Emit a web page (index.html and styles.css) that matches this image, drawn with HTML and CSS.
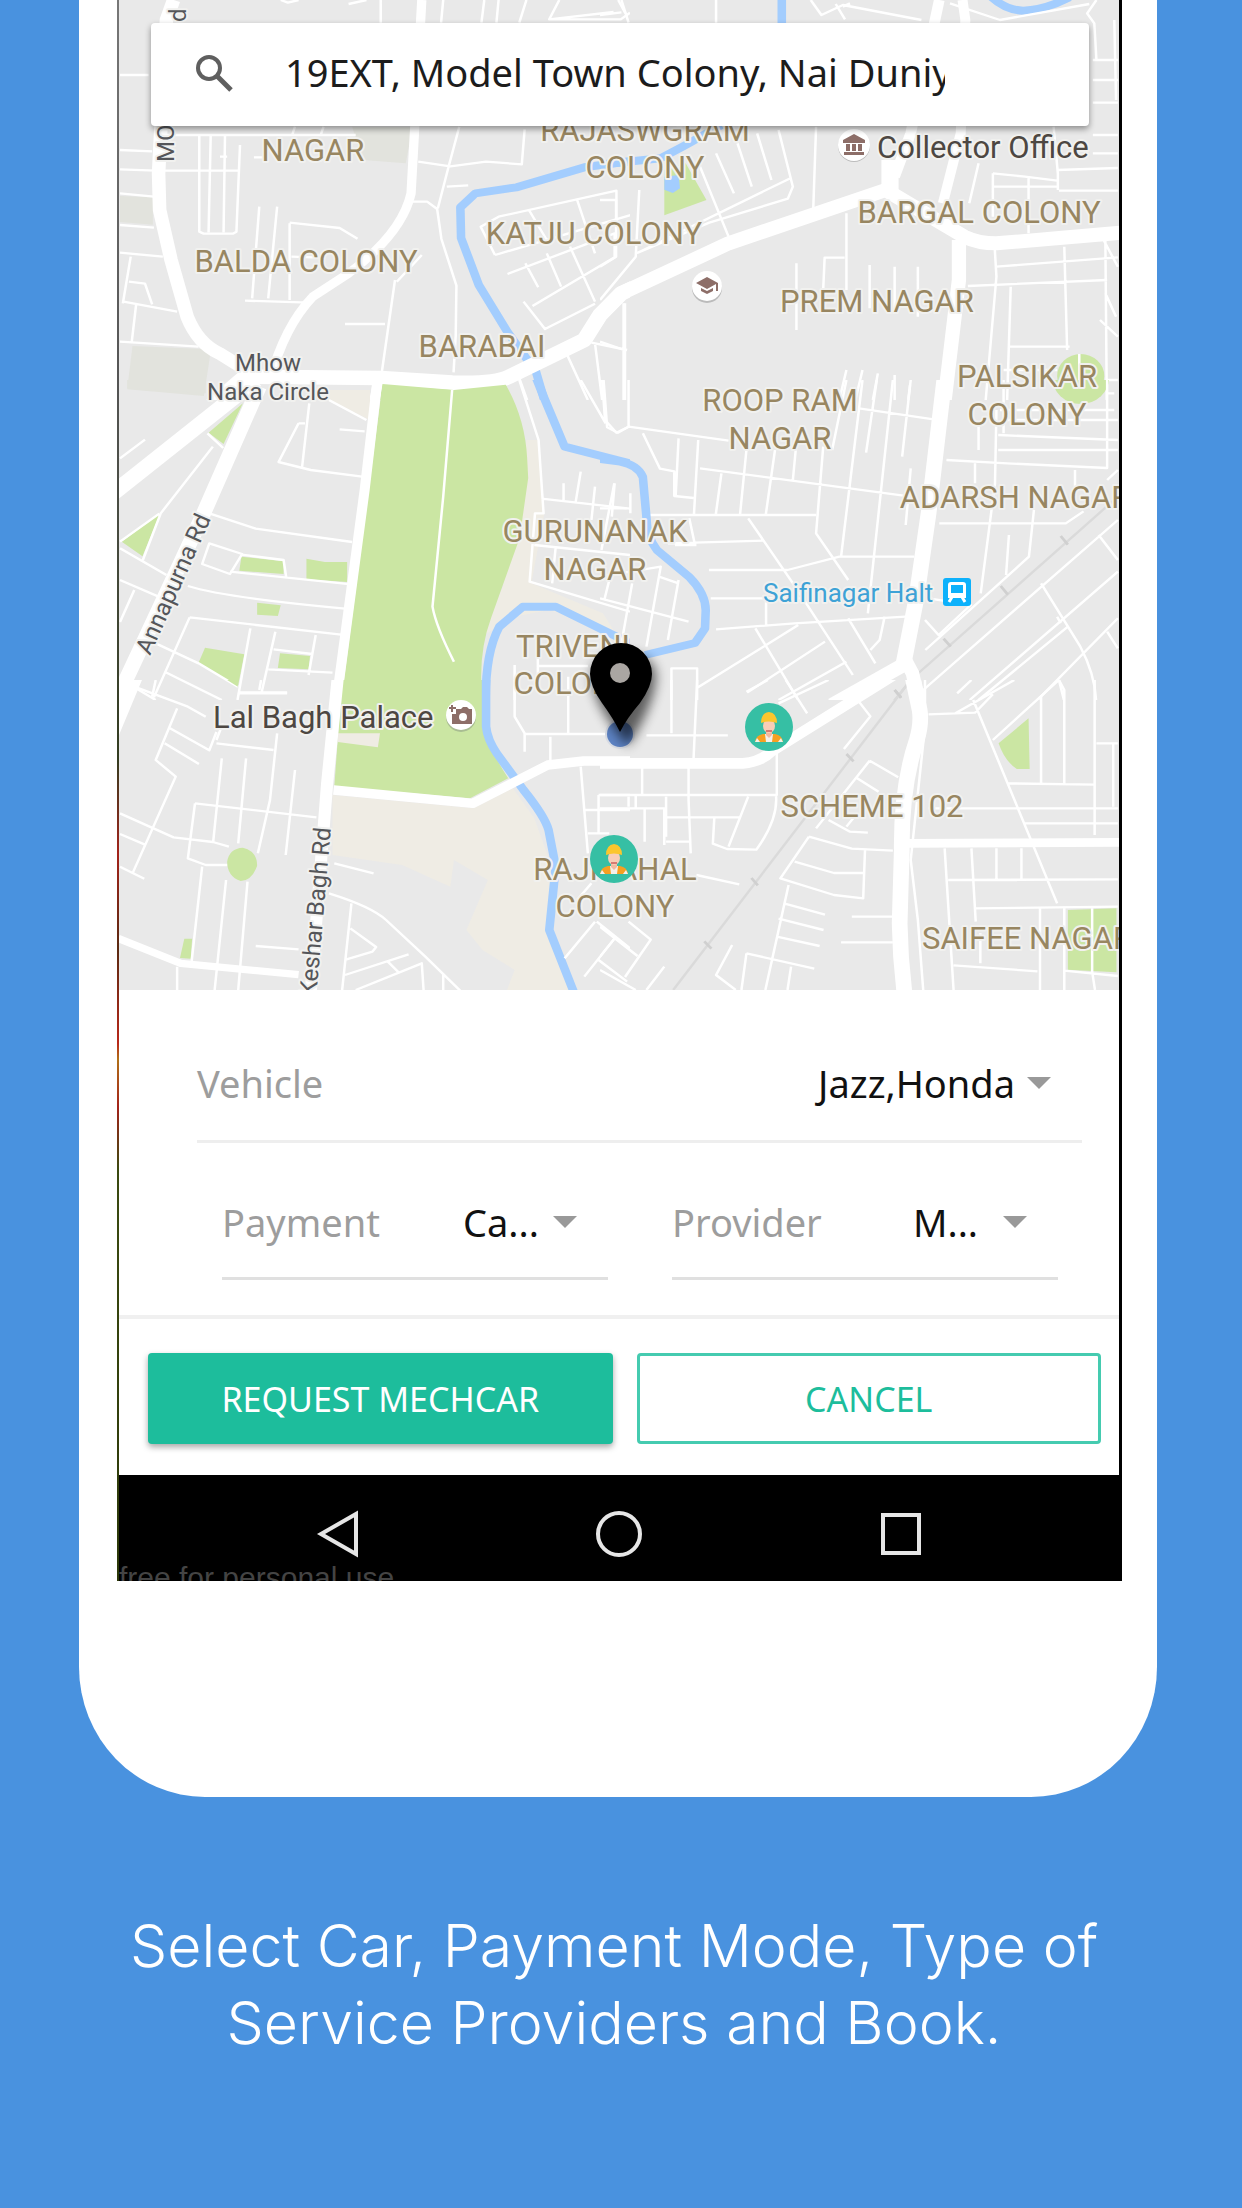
FILE: index.html
```html
<!DOCTYPE html>
<html lang="en">
<head>
<meta charset="utf-8">
<meta name="viewport" content="width=device-width, initial-scale=1">
<title>Request a mechanic</title>
<link rel="stylesheet" href="styles.css">
</head>
<body>
<main class="phone">
  <div class="screen">
    <section class="map-area">
      <svg class="map" viewBox="119 0 1000 990" role="img" aria-label="Map of the area around the pickup point">
        <defs>
          <filter id="soft" x="-50%" y="-50%" width="200%" height="200%"><feGaussianBlur stdDeviation="6"/></filter>
          <g id="mechanic">
            <circle r="24" fill="#36bfa4"/>
            <path d="M-14 15q1-7 8-8h12q7 1 8 8z" fill="#f6a021"/>
            <path d="M-14 15l2-4 3 4zM14 15l-2-4-3 4zM-4 7h8l-1 8h-6z" fill="#f4f0ea"/>
            <path d="M-3 3h6v5l-3 3-3-3z" fill="#f2b9a0"/>
            <ellipse cy="-1" rx="6" ry="7" fill="#f9cdb6"/>
            <path d="M-8-4q0-10 8-11 8 1 8 11-8-3-16 0z" fill="#fbc62d"/>
            <path d="M-3 4h6" stroke="#d77b72" stroke-width="2"/>
          </g>
        </defs>
        <rect x="119" width="1000" height="990" fill="#e9e9e9"/>

        <!-- north west -->
        <svg x="70" y="0" width="560" height="400" viewBox="0 0 1568 1200" preserveAspectRatio="none">
          <path class="block" d="M790 380h170l-20 110-120-10zM140 588l92 4v82l-92-8zM175 1038l220 10-20 140-215-20z"/>
          <path class="sand" d="M720 1170h120v30h-100z"/>
          <path class="park" d="M875 1152l200 14 145-14 14 48H868z"/>
          <path class="river" d="M1568 484l-128 18-190 60-115 18-42 42 2 92 50 142 80 140 80 120 30 110"/>
          <path class="lane" d="M140 225h80M140 450l90 4M140 508l100 4h230M140 580l95 10M140 675l95 8M140 758l120 12M165 845l45 6 20 62M150 905l150 30M185 915l-12 110M140 1025l220 15M170 770l-22 140M362 405v290l12 6h82l10-6 10-260M394 405l-6 292M434 405l-4 292M240 405h560M530 620l-20 275M580 620l-25 275M490 902l180 6M615 670v230M615 668l140 16 50 32M620 770l60 2M940 605h60l28 22 12 90 42 140-2 150-6 110M910 840l-40 300M985 765l-70 80M770 972h112M975 485l90 14 100-14 100 8 8-105M1090 380l-30 120-30 125M1055 560l60-4M870 0v68M1045 0l-6 68M1160 0l-8 68M1200 0l-6 68M1278 0l-20 68M1370 0l-28 58h200l26-20M1342 58l180-22M1535 0l20 40M590 0l20 8 30-8M780 12l50-12M1190 765l-40-85 50-30 330-78v110M1190 765l380-120M1285 630l50 90M1420 600l50 160M1225 822l300-122v72l-230 146M1275 790l36 72M1335 760l40 100M1400 740l70 165M1270 905l60 82 140-76M1550 910v290M1470 1030l20 170M1390 1060l60 140M1250 1110l30 90M1460 1028l100 22M630 380l-8 25M710 380l-8 25M440 470h-20M515 472h30"/>
          <g class="road">
            <path d="M290 0l-20 60-22 460 3 110 32 150 45 170q30 80 90 110l90 60" stroke-width="38"/>
            <path d="M490 1130l380 4 200 14q120 4 160-18l210-110 44-75 60-65 66-33" stroke-width="44"/>
            <path d="M560 1140q40-160 120-250l100-70q150-120 175-240l30-580" stroke-width="26"/>
            <path d="M490 1130l-120 110M500 1130l-40 110" stroke-width="44"/>
            <path d="M865 1130l-16 90" stroke-width="28"/>
          </g>
        </svg>

        <!-- north east -->
        <svg x="600" y="0" width="560" height="400" viewBox="0 0 1568 1200" preserveAspectRatio="none">
          <path class="park" d="M180 510l60-20 58 110-118 46z"/>
          <circle class="park" cx="1346" cy="1128" r="66"/>
          <path d="M180 530l40-5 4 40-20 14-24-10z" fill="#a3cdfe"/>
          <path class="river" d="M-10 495l180-20 70-40 100-60M509 0v120M1095-10q40 40 90 42 60-2 130-40" />
          <path class="lane" d="M0 45l60-8M60 0l20 68M325 0v68M590 0l30 45 60-30 220 45M700 10l-20 10M660 12l26 46M980 10l140 50 250-48M1390 0l-26 40 20 30 6 110M1380 180h70M1380 240h70M1380 308h70M1440 60l5 240M1380 405h70M1270 380l12 140v50M1380 460h70M1280 510l170-6M1285 572h165M1100 520l90 10 90 12M1100 520v130M1100 560h180M1200 530v170M1060 490l-26 120M605 380l-8 250M440 400l40 140M385 430l40 130M325 460l50 120M280 500l80 210M500 390l40 170-14 36-220 72-200 90 430-225M110 570l-10 200-100 130M0 600h45v170l-45 30M690 640v230M625 868l4-95h56M550 790v200M755 795v130M825 800v130M890 800v150M1105 740l5 90-30 370M1110 800l340-28M1030 858l390-18M1150 860l-10 340M1300 740l8 310M1415 720l4 480M1410 720l40 80M1415 880l30 70M1145 1040h170M1130 1110h150M1400 960l50 50M1420 1140h30M70 910v290M0 1025l68 25M690 1110l-20 90M735 1110l-20 90M778 1120l-14 80M825 1125v75M868 1155l-5 45M1342 1062v138"/>
          <g class="road">
            <path d="M-44 1020l44-75 60-65 300-150 440-160 220 140q40 20 90 20l350-32" stroke-width="42"/>
            <path d="M950 0l-30 150-50 250-45 130" stroke-width="30"/>
            <path d="M1015 0l8 60-13 340-50 210" stroke-width="28"/>
            <path d="M812 480v110" stroke-width="48"/>
            <path d="M1005 720v120l-40 360" stroke-width="40"/>
          </g>
        </svg>

        <!-- middle west -->
        <svg x="70" y="380" width="560" height="320" viewBox="0 0 1568 960" preserveAspectRatio="none">
          <path class="block" d="M160 0h220v40l-220-16z"/>
          <path class="sand" d="M730 30h110v90l-115-60zM1278 180h34l16 220-36 210 200 90 30 50-180-60-100 20-90 60 60-150z"/>
          <path class="park" d="M875 12l200 18 145-16q54 100 60 220l3 60-24 180-80 240q-38 110-24 246H760z"/>
          <path class="park" d="M388 158l96-88-54 122zM145 485l108-86-50 130zM480 530l118 14v38l-124-10zM662 536l52 10h62v60l-114-8zM524 668l66 8-8 32-58-4zM378 803l110 20-18 97-110-72zM588 820l84 8-4 40-86-4z"/>
          <path class="river" stroke-width="36" d="M1568 790l-208-110h-92l-66 60q-40 80-38 230"/>
          <path class="river" d="M1300-20l30 80 55 140 190 52"/>
          <path class="lane" d="M140 235l70-56M140 295l20 12M385 160l44 44M400 200l-146 200-50 140M140 485l110-84M140 505l130 80M140 600l160 74M180 630l-40 96M390 400l130 46 270 40M390 490l-20 62 78 30 34-60zM480 524l118 16 8 56M448 575l340 38M330 618q100 34 440 68M335 712l424 52M335 712l-100 240M240 790l120 60 110 70M265 875l160 85M180 922l60 38M505 745l-36 215M575 755l-38 180M470 937h138M688 765l-20 120M570 808l108 14M555 868l180 10M640 130l-56 116 90 24 144 20M670 70l-20 190M640 130h18M755 148l70 6M725 60l105 60M1070 30l-25 320-30 330q10 60 60 165" />
          <path class="lane" d="M1258 0l54 180 14 220-24 0-15 205 281 90M1320 356l248 30M1382 310v50M1430 275l-14 90M1470 320l-10 100M1525 310l-8 100M1300 495l268 30M1360 500l-10 110M1510 600l-14 60M1430 0l70 130M1490 0l8 120 32 38 38-20M1245 855v105M1310 830v90M1395 890v70M1310 858h140"/>
          <g class="road">
            <path d="M520 0L120 340" stroke-width="46"/>
            <path d="M530 20L370 410 200 800 130 960" stroke-width="42"/>
            <path d="M862-10L825 330 745 970" stroke-width="28"/>
          </g>
        </svg>

        <!-- middle east -->
        <svg x="600" y="380" width="560" height="320" viewBox="0 0 1568 960" preserveAspectRatio="none">
          <circle class="park" cx="1346" cy="-8" r="80"/>
          <path class="lane" d="M80 0v140l-30 18-30-16L10 0M80 140l280 42M120 160l48 106 40 8v74l54 6M220 175l-8 170M275 180l-12 225M280 265l570 82M340 280l-16 125M410 210l-18 195M490 210l-26 195M548 210l-8 90M625 200l-20 260 90 140M140 405h465M690 0l-40 210M735 0l-60 530M775 0l-30 218M820 0l-70 700M870 0l-24 230M725 85l214 34M870 265l-14 170M415 415l135 210 158 260M190 490l270-8M250 415l14 70M305 570h220l145-40h210M310 655h250M325 748l220-18 310-20M465 655v80M435 745l120 215M555 735L270 925M630 785L412 938M690 845L500 960M695 715l76 135M797 710l-14 70-26 30M200 960v-95h72v95M0 385h75M40 310l-36 200M85 340v60M0 590l170-30-40 240M0 655l248 70M220 600l-30 180M90 610l-30 180M165 590l55 20M270 495h-60" />
          <path class="lane" d="M970 240l170 10 280 14v-264M1110 90l-4 220-40 330M1130 0v160M1115 165l335 15M1115 210h335M1135 120h315M1060 130v80M1050 250v60M1330 270v90M1420 300l30-30M950 430h354l50-36M1145 465l-8 120M1215 390l-14 140-290 280M910 720l38 45 90-90-118-20M1450 420L905 930v30M1396 465l54 75M1235 610l110 190q40 80 44 160M1310 740L1060 960M1450 575L1035 960M1450 715L1225 960M1420 755l30 50M1285 900l14 60M1290 730l-10-20M1440 90h-320M1440 40h-20"/>
          <path class="rail" d="M1450 350L870 900l-60 80"/>
          <path class="rail-mark" d="M1290 468l20 26M1122 618l20 26M962 776l20 24M825 930l18 24"/>
          <path class="river" d="M-10 235l66 10q50 10 64 46l10 120q0 60 30 100l90 80q46 50 46 100l-2 54-28 44-140 36"/>
          <g class="road">
            <path d="M965-10L920 400 885 660 850 850" stroke-width="44"/>
            <path d="M850 830l25 50 20 100" stroke-width="38"/>
            <path d="M865 845L650 975" stroke-width="42"/>
          </g>
        </svg>

        <!-- south west -->
        <svg x="70" y="680" width="560" height="330" viewBox="0 0 1568 990" preserveAspectRatio="none">
          <path class="park" d="M762 0h393v130q20 80 72 165l-107 60-380-35zM440 0h30v20z"/>
          <path class="sand" d="M750 160h118l-6 42-112-16zM735 345l395 40 110-60 60 90 50 150-18 180 78 200-190-5 25-70-90-60-45-60 60-150-95-60-10 80-135-65-195-30z"/>
          <path class="park" d="M440 545q6-40 44-42 40 10 40 54-14 44-46 46-38-14-38-58zM320 776h22l-4 60-30-2z"/>
          <path class="river" stroke-width="24" d="M1165-10v150q4 40 30 80l75 110q60 80 70 120l20 110-18 190 70 190"/>
          <path class="lane" d="M180 20l150 60 50 30M300 85l-60 155 56 50L175 580M265 190l96 62M280 145l110 66 20-55M410 190l160 20M580 160l-20 200-34 160M425 235l-24 250M493 235l-22 255M630 270l-26 255M350 370l340 42M350 370l-20 165 50 20h60M140 400l150 72 110 14 45 14M140 462l70 32M140 560l68 36M370 560l-30 290M437 600l-32 330M497 605l-26 325M300 860v70M410 180l18-50M520 798l120 10M740 550l110 30M725 640q120 40 160 80l110 110 110 115M788 670l-26 260M785 745l72 56-10 14-75 24M770 885l178-62M890 845l32 34M800 930l185-80 5 80M1045 880v50M230 50l10-50M470 40h138M535 0l-5 30M1245 0v110l28 50v55M1270 162h230M1345 170v75M1395 60v100M1430 260l20 260M1440 390h128M1480 345v115M1480 345h88M1450 460h60M1470 725l-85 110M1475 725l93 80M1525 775l-85 115M1480 840l80 65M1420 660l40-50"/>
          <g class="road">
            <path d="M185-10l-70 180" stroke-width="38"/>
            <path d="M750-10L720 310 670 990" stroke-width="34"/>
            <path d="M738 330l390 40 210-115 100-12h140" stroke-width="28"/>
            <path d="M135 775l175 75 330 34" stroke-width="22"/>
          </g>
        </svg>

        <!-- south east -->
        <svg x="600" y="680" width="560" height="330" viewBox="0 0 1568 990" preserveAspectRatio="none">
          <path class="park" d="M1116 190l84-75 3 152h-36q-34-24-51-77zM1310 690l136-5v192l-136-8z"/>
          <path class="lane" d="M200 0v160M272 0l-10 235M130 166h228M520 0l60 100M640 0L500 70M725 65l32 44-74 98M118 260v85M0 345h495V215M248 260v100l6 160M0 385h180v110M185 350v120M80 350v30M100 345v38M125 385v100M185 412h210M415 350l-55 150M320 415l-4 76 40 16 82 2q60-90 55-160M185 485h70M270 585l120 28M755 242L605 445M755 242l80 50M720 295l60 40M640 420l60 35 50 3M690 440l30-40M585 470l120 36 115 6M585 470l-80 125 150 50 82 10 5-145M545 545l110 34h85M528 615l-65 315M515 670l115 34M500 716l126 34M495 770l120 28M410 820l190 46M410 820l-14 110M535 860l-10 70M705 710h115M675 787h145M370 795l-45 90 55 45M80 725l62 54-72 112M0 740l105 88M45 770L0 830M0 870l100 60M130 930l50-70M60 640l-20 40M410 35l60-35" />
          <path class="lane" d="M910 0v140l-40 400 20 180 15 210M920 103l130-5 50-55M1045 60L1280 670M995 100l165-100M1100 180L1285 0 1300 30v280M1235 50v260M1140 310l245 4M1385 0v465M1390 190h60M1437 190v190M920 385h530M1190 430h260M965 505l25 425M1040 505l12 220M1110 505v95M1180 505v95M975 600l475-2M1050 685l400-5M1065 760v90M990 856l235 18M1232 685v245M1300 685v245M1300 872l150 16M1378 685v190l8 55M1040 0l-40 40"/>
          <path class="rail" d="M870 0L205 930"/>
          <path class="rail-mark" d="M825 30l18 22M690 222l20 22M424 594l18 22M292 784l20 22"/>
          <g class="road">
            <path d="M0 250h400q50-4 80-36L860-40" stroke-width="32"/>
            <path d="M875-10l20 100q6 40-8 90-44 140-42 330l-6 220q2 130 20 260" stroke-width="44"/>
            <path d="M860 490l600-3" stroke-width="26"/>
          </g>
        </svg>

        <g class="district">
          <text x="313" y="161">NAGAR</text>
          <text x="306" y="272">BALDA COLONY</text>
          <text x="482" y="357">BARABAI</text>
          <text x="645" y="141">RAJASWGRAM</text>
          <text x="645" y="178">COLONY</text>
          <text x="594" y="244">KATJU COLONY</text>
          <text x="979" y="223">BARGAL COLONY</text>
          <text x="877" y="312">PREM NAGAR</text>
          <text x="780" y="411">ROOP RAM</text>
          <text x="780" y="449">NAGAR</text>
          <text x="1027" y="387">PALSIKAR</text>
          <text x="1027" y="425">COLONY</text>
          <text x="1015" y="508">ADARSH NAGAR</text>
          <text x="595" y="542">GURUNANAK</text>
          <text x="595" y="580">NAGAR</text>
          <text x="573" y="657">TRIVENI</text>
          <text x="573" y="694">COLONY</text>
          <text x="872" y="817">SCHEME 102</text>
          <text x="615" y="880">RAJMAHAL</text>
          <text x="615" y="917">COLONY</text>
          <text x="1027" y="949">SAIFEE NAGAR</text>
        </g>
        <g class="place">
          <text x="877" y="158">Collector Office</text>
          <text x="213" y="728">Lal Bagh Palace</text>
        </g>
        <text class="station" x="763" y="602">Saifinagar Halt</text>
        <g class="street">
          <text x="268" y="371" text-anchor="middle">Mhow</text>
          <text x="268" y="400" text-anchor="middle">Naka Circle</text>
          <text transform="translate(150 656) rotate(-66)">Annapurna Rd</text>
          <text transform="translate(331 828) rotate(-85)" text-anchor="end">Keshar Bagh Rd</text>
          <text transform="translate(174 162) rotate(-90)">MO</text>
          <text transform="translate(186 22) rotate(-90)">d</text>
        </g>

        <!-- public building -->
        <g transform="translate(854 145)">
          <circle cy="1" r="16" fill="#bbb"/><circle r="16" fill="#fff"/>
          <path d="M-11-5L0-11 11-5v3h-22zM-8-1h4v7h-4zM-2-1h4v7h-4zM4-1h4v7h-4zM-10 7h20v3h-20z" fill="#8d6e68"/>
        </g>
        <!-- school -->
        <g transform="translate(707 286)">
          <circle cy="2" r="15" fill="#bbb"/><circle r="15" fill="#fff"/>
          <path d="M-11-3L0-9l11 6v8H9v-7L0 3zM-6 2l6 3 6-3v3L0 8l-6-3z" fill="#8d6e68"/>
        </g>
        <!-- viewpoint -->
        <g transform="translate(461 715)">
          <circle cy="2" r="15" fill="#a9bd92"/><circle r="15" fill="#fff"/>
          <path d="M-9-10v7M-12-7h7" stroke="#8d6e68" stroke-width="2"/>
          <path d="M-9-1h4v-5h5l2-2h4l2 2h3V9H-9z" fill="#8d6e68"/>
          <circle cx="2" cy="2" r="4" fill="#fff"/>
        </g>
        <!-- railway station -->
        <g transform="translate(943 578)">
          <rect width="28" height="28" rx="3" fill="#0db1fb"/>
          <path d="M5 7q0-3 3-3h12q3 0 3 3v13H5z" fill="#fff"/>
          <path d="M8 7h12v8H8z" fill="#0db1fb"/>
          <path d="M9 19l-3 5M19 19l3 5" stroke="#fff" stroke-width="3"/>
        </g>

        <!-- providers and pickup point -->
        <use href="#mechanic" x="769" y="727"/>
        <use href="#mechanic" x="614" y="859"/>
        <circle cx="620" cy="734" r="15" fill="#d8dce4"/>
        <circle cx="620" cy="734" r="13" fill="#5d83c4"/>
        <path d="M628 746q-34-40-36-68 0-24 32-24t32 24q-2 28-28 68z" fill="#000" opacity=".6" filter="url(#soft)"/>
        <path d="M620 732q-7-14-18-29-12-17-12-29a31 31 0 0 1 62 0q0 12-12 29-13 15-20 29z" fill="#000"/>
        <circle cx="620" cy="673" r="10" fill="#aaa6a2"/>
      </svg>

      <div class="search">
        <svg class="search-icon" viewBox="0 0 38 38" aria-hidden="true"><circle cx="14" cy="14" r="11" fill="none" stroke="#5f5f5f" stroke-width="4"/><path d="M22 22l14 14" stroke="#5f5f5f" stroke-width="5"/></svg>
        <input class="search-input" type="text" aria-label="Pickup address" value="19EXT, Model Town Colony, Nai Duniya">
      </div>
    </section>

    <form class="booking">
      <div class="field field-wide">
        <label class="field-label" for="vehicle">Vehicle</label>
        <select class="field-value" id="vehicle"><option>Jazz,Honda</option></select>
        <svg class="caret" viewBox="0 0 24 12" aria-hidden="true"><path d="M0 0h24L12 12z"/></svg>
      </div>
      <div class="field-pair">
        <div class="field">
          <label class="field-label" for="payment">Payment</label>
          <select class="field-value" id="payment"><option>Ca...</option></select>
          <svg class="caret" viewBox="0 0 24 12" aria-hidden="true"><path d="M0 0h24L12 12z"/></svg>
        </div>
        <div class="field">
          <label class="field-label" for="provider">Provider</label>
          <select class="field-value" id="provider"><option>M...</option></select>
          <svg class="caret" viewBox="0 0 24 12" aria-hidden="true"><path d="M0 0h24L12 12z"/></svg>
        </div>
      </div>
      <div class="actions">
        <button class="button button-primary" type="button">REQUEST MECHCAR</button>
        <button class="button button-outline" type="button">CANCEL</button>
      </div>
    </form>

    <nav class="system-bar" aria-label="System">
      <button class="system-button" type="button" aria-label="Back"><svg viewBox="0 0 48 48"><path d="M42 4v40L7 24z"/></svg></button>
      <button class="system-button" type="button" aria-label="Home"><svg viewBox="0 0 48 48"><circle cx="24" cy="24" r="21"/></svg></button>
      <button class="system-button" type="button" aria-label="Recent apps"><svg viewBox="0 0 48 48"><path d="M7 5h36v38H7z"/></svg></button>
      <span class="watermark">free for personal use</span>
    </nav>
  </div>
</main>
<p class="caption">Select Car, Payment Mode, Type of Service Providers and Book.</p>
</body>
</html>
```
FILE: styles.css
```css
* { box-sizing: border-box; }

body {
  margin: 0;
  background: #4992df;
  font-family: "Noto Sans", "Open Sans", sans-serif;
}

.phone {
  margin: 0 85px 0 79px;
  padding: 0 35px 216px 38px;
  background: #fff;
  border-radius: 0 0 126px 126px / 0 0 130px 130px;
}

.screen {
  padding: 0 3px 0 2px;
  background:
    linear-gradient(#777, #555 24%, #333c20 48%, #a3231a 54%, #5a2a12 60%, #b8281a 66%, #b07018 67%, #a3231a 70%, #3a4a10 74%, #2c3808) left / 2px 100% no-repeat,
    #000;
}

/* Map */
.map-area { position: relative; }
.map { display: block; width: 100%; height: auto; }
.block { fill: #e2e3dd; }
.sand { fill: #efece4; }
.park { fill: #cbe6a3; }
.river { fill: none; stroke: #a3cdfe; stroke-width: 24; stroke-linejoin: round; }
.lane { fill: none; stroke: #fff; stroke-width: 7; stroke-linejoin: round; }
.road { fill: none; stroke: #fff; stroke-linejoin: round; }
.rail { fill: none; stroke: #dadada; stroke-width: 7; }
.rail-mark { fill: none; stroke: #d0d0d0; stroke-width: 8; }

.map text {
  font-family: Roboto, sans-serif;
  paint-order: stroke;
  stroke: #f1f1ef;
  stroke-width: 4px;
  stroke-linejoin: round;
}
.district { fill: #988661; font-size: 31px; text-anchor: middle; }
.place { fill: #4d4742; font-size: 31px; }
.station { fill: #3ea2d6; font-size: 26px; }
.street { fill: #55565a; font-size: 24px; }

.search {
  position: absolute;
  top: 23px;
  left: 32px;
  right: 30px;
  height: 103px;
  padding: 0 144px 4px 44px;
  display: flex;
  align-items: center;
  gap: 52px;
  background: #fff;
  border-radius: 4px;
  box-shadow: 0 3px 6px rgba(0, 0, 0, .4);
}
.search-icon { flex: none; width: 38px; height: 38px; }
.search-input {
  flex: 1;
  min-width: 0;
  height: 56px;
  padding: 0 0 2px;
  border: 0;
  background: none;
  color: #1c1c1c;
  font: 38px "Noto Sans", "Open Sans", sans-serif;
}

/* Booking form */
.booking { background: #fff; }
.field {
  display: flex;
  align-items: center;
  height: 137px;
  padding: 24px 31px 0 0;
  border-bottom: 3px solid #e0e0e0;
}
.field-wide {
  height: 153px;
  margin: 0 37px 0 78px;
  padding-top: 36px;
  border-bottom-color: #eee;
}
.field-pair {
  display: grid;
  grid-template-columns: 1fr 1fr;
  gap: 64px;
  padding: 0 61px 35px 103px;
  border-bottom: 4px solid #f0f0f0;
}
.field-label { color: #9d9d9d; font-size: 38px; line-height: 52px; }
.field-pair .field-label { flex: none; width: 241px; }
.field-value {
  flex: 1;
  min-width: 0;
  padding: 0;
  border: 0;
  background: none;
  appearance: none;
  color: #111;
  font: 38px/52px "Noto Sans", "Open Sans", sans-serif;
}
.field-wide .field-value { text-align-last: right; }
.caret { flex: none; width: 24px; height: 12px; margin-left: 12px; fill: #999; }

.actions {
  display: grid;
  grid-template-columns: 1fr 1fr;
  gap: 24px;
  padding: 34px 18px 31px 29px;
}
.button {
  height: 91px;
  padding: 0;
  border-radius: 4px;
  font: 34px "Noto Sans", "Open Sans", sans-serif;
}
.button-primary {
  border: 0;
  background: #1dbd9c;
  color: #fff;
  box-shadow: 0 3px 6px rgba(0, 0, 0, .35);
}
.button-outline { border: 3px solid #45cbb0; background: #fff; color: #1dbd9c; }

/* System bar */
.system-bar {
  position: relative;
  height: 106px;
  padding: 12px 195px 0;
  display: flex;
  justify-content: space-between;
  align-items: center;
  overflow: hidden;
}
.system-button { width: 48px; height: 48px; padding: 0; border: 0; background: none; }
.system-button svg { display: block; fill: none; stroke: #e6e6e6; stroke-width: 4; }
.watermark {
  position: absolute;
  left: 0;
  bottom: -15px;
  color: #444;
  font: 30px/36px "Liberation Sans", sans-serif;
}

.caption {
  margin: 110px 122px 0 108px;
  color: #fff;
  font: 300 59px/77px Inter, Lato, sans-serif;
  text-align: center;
}
```
